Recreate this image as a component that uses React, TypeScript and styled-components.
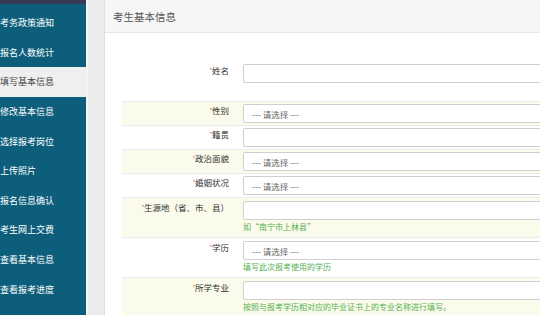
import styled, { createGlobalStyle } from "styled-components";

const GlobalStyle = createGlobalStyle`
  body {
    margin: 0;
    overflow: hidden;
    font-family: "Noto Sans CJK SC", "Noto Sans", sans-serif;
    background: #ececec;
  }
`;

const menu = [
  "考务政策通知",
  "报名人数统计",
  "填写基本信息",
  "修改基本信息",
  "选择报考岗位",
  "上传照片",
  "报名信息确认",
  "考生网上交费",
  "查看基本信息",
  "查看报考进度",
];

type Field = {
  label: string;
  kind: "input" | "select";
  hint?: string;
  tinted?: boolean;
};

const fields: Field[] = [
  { label: "性别", kind: "select", tinted: true },
  { label: "籍贯", kind: "input" },
  { label: "政治面貌", kind: "select", tinted: true },
  { label: "婚姻状况", kind: "select" },
  { label: "生源地（省、市、县）", kind: "input", hint: "如\u201c南宁市上林县\u201d", tinted: true },
  { label: "学历", kind: "select", hint: "填写此次报考使用的学历" },
  { label: "所学专业", kind: "input", hint: "按照与报考学历相对应的毕业证书上的专业名称进行填写。", tinted: true },
];

const Page = styled.div`
  display: flex;
  width: 540px;
  height: 315px;
  overflow: hidden;
`;

const Sidebar = styled.nav`
  width: 86px;
  flex-shrink: 0;
  background: #0d5e7b;
  border-top: 4px solid #3b3a55;
  padding-top: 4px;
  box-sizing: border-box;
`;

const NavItem = styled.div<{ active?: boolean }>`
  height: 29.6px;
  display: flex;
  align-items: center;
  padding-left: 0;
  font-size: 9px;
  white-space: nowrap;
  color: ${(p) => (p.active ? "#444" : "#fff")};
  background: ${(p) => (p.active ? "#efefef" : "transparent")};
`;

const Main = styled.div`
  flex: 1;
  min-width: 0;
  display: flex;
  padding-left: 16px;
  border-left: 2px solid #f7f4f6;
  background: #ebebeb;
`;

const Panel = styled.section`
  flex: 1;
  min-width: 0;
  overflow: hidden;
  background: #fff;
  border-left: 1px solid #dedede;
`;

const PanelHeader = styled.div`
  height: 33px;
  box-sizing: border-box;
  padding: 0 8px;
  display: flex;
  align-items: center;
  font-size: 10.5px;
  color: #555;
  background: #f6f6f6;
  border-bottom: 1px solid #e6e6e6;
`;

const Form = styled.div`
  padding: 29px 0 0 17px;
`;

const Row = styled.div<{ tinted?: boolean; first?: boolean }>`
  display: grid;
  grid-template-columns: 113px 1fr;
  padding: ${(p) => (p.first ? "2px 0 18px" : "2px 0 2px")};
  background: ${(p) => (p.tinted ? "#fbfbeb" : "#fff")};
  border-bottom: 1px solid #ececec;
  &[data-hint="1"] {
    padding: 3px 0 4px;
  }
`;

const Label = styled.div`
  text-align: right;
  padding: 1px 6px 0 0;
  font-size: 8.5px;
  line-height: 10px;
  color: #333;
  white-space: nowrap;
`;

const Star = styled.span`
  font-size: 5px;
  vertical-align: top;
  color: #b33;
`;

const Cell = styled.div`
  padding-left: 8px;
`;

const TextBox = styled.input`
  display: block;
  width: 330px;
  height: 19px;
  box-sizing: border-box;
  border: 1px solid #cfcfcf;
  border-radius: 2px;
  background: #fff;
  outline: none;
`;

const SelectBox = styled.select`
  display: block;
  width: 330px;
  height: 19px;
  box-sizing: border-box;
  padding: 0 0 0 8px;
  border: 1px solid #cfcfcf;
  border-radius: 2px;
  background: #fff;
  appearance: none;
  font-family: "Noto Sans CJK SC", sans-serif;
  font-size: 8.5px;
  color: #666;
`;

const Hint = styled.div`
  margin-top: 1px;
  font-size: 8px;
  line-height: 12px;
  color: #52b052;
  white-space: nowrap;
`;

function Control({ kind }: { kind: Field["kind"] }) {
  if (kind === "select") {
    return (
      <SelectBox defaultValue="">
        <option value="">--- 请选择 ---</option>
      </SelectBox>
    );
  }
  return <TextBox type="text" />;
}

export default function App() {
  return (
    <>
      <GlobalStyle />
      <Page>
        <Sidebar>
          {menu.map((m) => (
            <NavItem key={m} active={m === "填写基本信息"}>
              {m}
            </NavItem>
          ))}
        </Sidebar>
        <Main>
          <Panel>
            <PanelHeader>考生基本信息</PanelHeader>
            <Form>
              <Row first>
                <Label>
                  <Star>*</Star>姓名
                </Label>
                <Cell>
                  <TextBox type="text" />
                </Cell>
              </Row>
              {fields.map((f) => (
                <Row key={f.label} tinted={f.tinted} data-hint={f.hint ? "1" : "0"}>
                  <Label>
                    <Star>*</Star>
                    {f.label}
                  </Label>
                  <Cell>
                    <Control kind={f.kind} />
                    {f.hint && <Hint>{f.hint}</Hint>}
                  </Cell>
                </Row>
              ))}
            </Form>
          </Panel>
        </Main>
      </Page>
    </>
  );
}
